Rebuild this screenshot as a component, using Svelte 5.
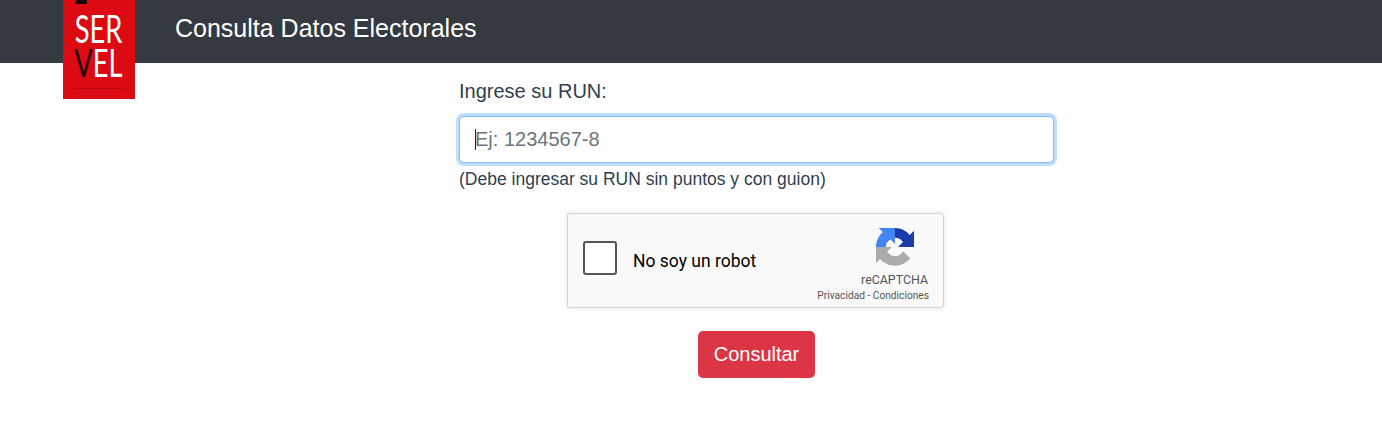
<script>
  let placeholder = 'Ej: 1234567-8';
</script>

<header class="bar">
  <div class="logo">
    <span class="notch"></span>
    <div class="word"><span>SER</span><span><b>V</b>EL</span></div>
    <span class="rule"></span>
  </div>
  <h1>Consulta Datos Electorales</h1>
</header>

<main class="form">
  <label for="run">Ingrese su RUN:</label>
  <div class="field">
    <input id="run" type="text" {placeholder} />
    <span class="caret"></span>
  </div>
  <p class="help">(Debe ingresar su RUN sin puntos y con guion)</p>

  <div class="captcha">
    <span class="check"></span>
    <span class="robot">No soy un robot</span>
    <div class="brand">
      <svg viewBox="0 0 64 64" width="38" height="38" aria-hidden="true">
        <path d="M64 31.955l-.033-1.37V4.687l-7.16 7.16C50.948 4.674 42.033.093 32.05.093 21.68.094 12.47 5.044 6.65 12.71l11.735 11.86a15.57 15.57 0 0 1 4.757-5.336c2.048-1.598 4.95-2.905 9.01-2.905.49 0 .97.066 1.32.19 5.03.398 9.4 3.178 11.97 7.21l-8.307 8.307c10.52-.04 22.4-.066 26.864.017" fill="#1c3aa9"/>
        <path d="M31.875 0l-1.37.033H4.606l7.16 7.16C4.593 13.052.012 21.967.012 31.95c0 10.37 4.95 19.58 12.616 25.4l11.86-11.735a15.57 15.57 0 0 1-5.336-4.757c-1.598-2.048-2.905-4.95-2.905-9.01 0-.49.066-.97.19-1.32.398-5.03 3.178-9.4 7.21-11.97l8.307 8.307C31.914 16.345 31.94 4.46 31.857 0" fill="#4285f4"/>
        <path d="M0 31.875l.033 1.37v25.898l7.16-7.16c5.86 7.173 14.774 11.754 24.76 11.754 10.37 0 19.58-4.95 25.4-12.616l-11.735-11.86a15.57 15.57 0 0 1-4.757 5.336c-2.048 1.598-4.95 2.905-9.01 2.905-.49 0-.97-.066-1.32-.19-5.03-.398-9.4-3.178-11.97-7.21l8.307-8.307C21.33 31.836 9.446 31.81 4.98 31.893" fill="#ababab"/>
      </svg>
      <span class="rc">reCAPTCHA</span>
      <span class="links">Privacidad - Condiciones</span>
    </div>
  </div>

  <button type="button">Consultar</button>
</main>

<style>
  :global(body) {
    background: #fff;
    font-family: "Liberation Sans", Arial, sans-serif;
    color: #2f3f50;
  }
  .bar {
    display: flex;
    align-items: flex-start;
    gap: 40px;
    height: 63px;
    padding-left: 63px;
    background: #343a40;
  }
  .logo {
    flex: none;
    position: relative;
    z-index: 1;
    display: flex;
    flex-direction: column;
    align-items: center;
    width: 72px;
    height: 99px;
    background: #dc0a12;
  }
  .notch {
    position: absolute;
    top: 0;
    left: 12px;
    width: 12px;
    height: 4px;
    background: #1a0506;
    clip-path: polygon(12% 0, 100% 0, 100% 100%, 0 100%);
  }
  .word {
    display: flex;
    flex-direction: column;
    margin-top: 11px;
    color: #fff;
    font-family: "Lato", sans-serif;
    font-weight: 400;
    font-size: 39px;
    line-height: 34px;
    transform: translateX(-1px) scaleX(0.7);
    text-align: center;
  }
  .word b {
    font-weight: 400;
    color: #1a0506;
  }
  .rule {
    position: absolute;
    left: 11px;
    right: 11px;
    bottom: 10px;
    height: 1px;
    background: #b40a10;
  }
  h1 {
    margin: 0;
    font-size: 25px;
    font-weight: 400;
    line-height: 57px;
    color: #fff;
  }
  .form {
    display: flex;
    flex-direction: column;
    align-items: flex-start;
    width: 595px;
    margin-left: 459px;
    padding-top: 16px;
  }
  label {
    font-size: 20px;
    line-height: 24px;
    margin-bottom: 13px;
  }
  .field {
    position: relative;
    width: 100%;
  }
  input {
    display: block;
    box-sizing: border-box;
    width: 100%;
    height: 47px;
    padding: 0 15px;
    border: 1px solid #80bdff;
    border-radius: 5px;
    outline: 0;
    box-shadow: 0 0 0 3px rgba(0, 123, 255, 0.25);
    font: 20px "Liberation Sans", Arial, sans-serif;
    color: #495057;
    background: #fff;
  }
  input::placeholder {
    color: #6c757d;
    opacity: 1;
  }
  .caret {
    position: absolute;
    left: 16px;
    top: 13px;
    width: 1px;
    height: 21px;
    background: #222;
  }
  .help {
    margin: 4px 0 0;
    font-size: 17.5px;
    line-height: 24px;
  }
  .captcha {
    box-sizing: border-box;
    align-self: center;
    display: flex;
    align-items: center;
    width: 377px;
    height: 95px;
    margin: 22px 0 23px;
    transform: translateX(-1px);
    padding-left: 15px;
    background: #f9f9f9;
    border: 1px solid #d3d3d3;
    border-radius: 3px;
    box-shadow: 0 0 4px 1px rgba(0, 0, 0, 0.08);
    font-family: Roboto, sans-serif;
    color: #000;
  }
  .check {
    flex: none;
    box-sizing: border-box;
    width: 34px;
    height: 34px;
    margin-bottom: 5px;
    background: #fff;
    border: 2px solid #555;
    border-radius: 3px;
  }
  .robot {
    margin-left: 16px;
    font-size: 17.5px;
  }
  .brand {
    margin-left: auto;
    margin-right: 14px;
    display: flex;
    flex-direction: column;
    align-items: flex-end;
    color: #555;
  }
  .brand svg {
    display: block;
    margin-top: 8px;
    margin-right: 15px;
  }
  .rc {
    margin-top: 6px;
    margin-right: 1px;
    font-size: 12.4px;
    line-height: 15px;
  }
  .links {
    margin-top: 2px;
    font-size: 10.2px;
    line-height: 13px;
    white-space: nowrap;
  }
  button {
    align-self: center;
    height: 47px;
    padding: 0 16px;
    border: 0;
    border-radius: 5px;
    background: #dc3545;
    color: #fff;
    font: 20px "Liberation Sans", Arial, sans-serif;
  }
</style>
